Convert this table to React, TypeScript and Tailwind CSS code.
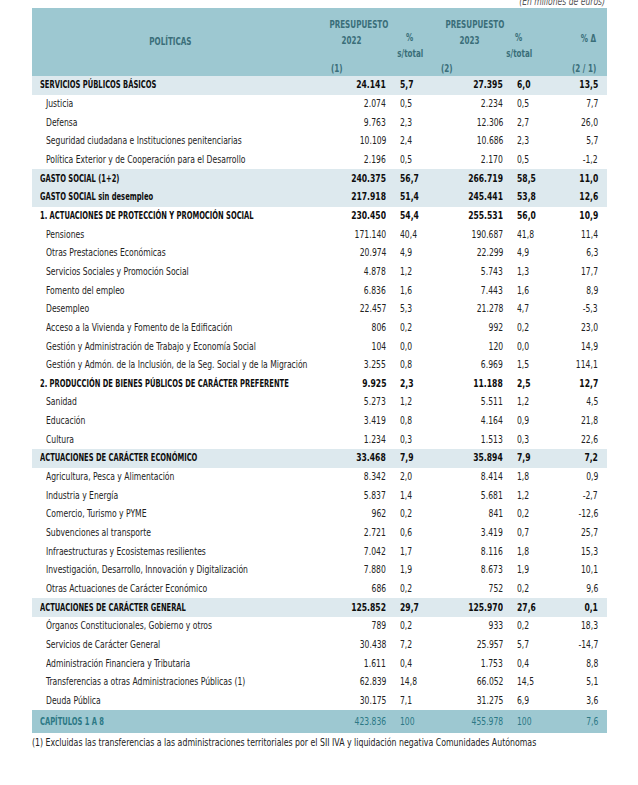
type Kind = "band" | "bold" | "item";

type Row = {
  label: string;
  kind: Kind;
  v22: string;
  p22: string;
  v23: string;
  p23: string;
  d: string;
};

const r = (kind: Kind, label: string, v22: string, p22: string, v23: string, p23: string, d: string): Row => ({
  kind,
  label,
  v22,
  p22,
  v23,
  p23,
  d,
});

const rows: Row[] = [
  r("band", "SERVICIOS PÚBLICOS BÁSICOS", "24.141", "5,7", "27.395", "6,0", "13,5"),
  r("item", "Justicia", "2.074", "0,5", "2.234", "0,5", "7,7"),
  r("item", "Defensa", "9.763", "2,3", "12.306", "2,7", "26,0"),
  r("item", "Seguridad ciudadana e Instituciones penitenciarias", "10.109", "2,4", "10.686", "2,3", "5,7"),
  r("item", "Política Exterior y de Cooperación para el Desarrollo", "2.196", "0,5", "2.170", "0,5", "-1,2"),
  r("band", "GASTO SOCIAL (1+2)", "240.375", "56,7", "266.719", "58,5", "11,0"),
  r("band", "GASTO SOCIAL sin desempleo", "217.918", "51,4", "245.441", "53,8", "12,6"),
  r("bold", "1. ACTUACIONES DE PROTECCIÓN Y PROMOCIÓN SOCIAL", "230.450", "54,4", "255.531", "56,0", "10,9"),
  r("item", "Pensiones", "171.140", "40,4", "190.687", "41,8", "11,4"),
  r("item", "Otras Prestaciones Económicas", "20.974", "4,9", "22.299", "4,9", "6,3"),
  r("item", "Servicios Sociales y Promoción Social", "4.878", "1,2", "5.743", "1,3", "17,7"),
  r("item", "Fomento del empleo", "6.836", "1,6", "7.443", "1,6", "8,9"),
  r("item", "Desempleo", "22.457", "5,3", "21.278", "4,7", "-5,3"),
  r("item", "Acceso a la Vivienda y Fomento de la Edificación", "806", "0,2", "992", "0,2", "23,0"),
  r("item", "Gestión y Administración de Trabajo y Economía Social", "104", "0,0", "120", "0,0", "14,9"),
  r("item", "Gestión y Admón. de la Inclusión, de la Seg. Social y de la Migración", "3.255", "0,8", "6.969", "1,5", "114,1"),
  r("bold", "2. PRODUCCIÓN DE BIENES PÚBLICOS DE CARÁCTER PREFERENTE", "9.925", "2,3", "11.188", "2,5", "12,7"),
  r("item", "Sanidad", "5.273", "1,2", "5.511", "1,2", "4,5"),
  r("item", "Educación", "3.419", "0,8", "4.164", "0,9", "21,8"),
  r("item", "Cultura", "1.234", "0,3", "1.513", "0,3", "22,6"),
  r("band", "ACTUACIONES DE CARÁCTER ECONÓMICO", "33.468", "7,9", "35.894", "7,9", "7,2"),
  r("item", "Agricultura, Pesca y Alimentación", "8.342", "2,0", "8.414", "1,8", "0,9"),
  r("item", "Industria y Energía", "5.837", "1,4", "5.681", "1,2", "-2,7"),
  r("item", "Comercio, Turismo y PYME", "962", "0,2", "841", "0,2", "-12,6"),
  r("item", "Subvenciones al transporte", "2.721", "0,6", "3.419", "0,7", "25,7"),
  r("item", "Infraestructuras y Ecosistemas resilientes", "7.042", "1,7", "8.116", "1,8", "15,3"),
  r("item", "Investigación, Desarrollo, Innovación y Digitalización", "7.880", "1,9", "8.673", "1,9", "10,1"),
  r("item", "Otras Actuaciones de Carácter Económico", "686", "0,2", "752", "0,2", "9,6"),
  r("band", "ACTUACIONES DE CARÁCTER GENERAL", "125.852", "29,7", "125.970", "27,6", "0,1"),
  r("item", "Órganos Constitucionales, Gobierno y otros", "789", "0,2", "933", "0,2", "18,3"),
  r("item", "Servicios de Carácter General", "30.438", "7,2", "25.957", "5,7", "-14,7"),
  r("item", "Administración Financiera y Tributaria", "1.611", "0,4", "1.753", "0,4", "8,8"),
  r("item", "Transferencias a otras Administraciones Públicas (1)", "62.839", "14,8", "66.052", "14,5", "5,1"),
  r("item", "Deuda Pública", "30.175", "7,1", "31.275", "6,9", "3,6"),
];

const cols = "grid grid-cols-[300px_56px_58px_58px_56px_1fr]";

// the source PDF is a narrow face (Calibri), so text is squeezed horizontally
const squeezeL = "inline-block whitespace-nowrap origin-left scale-x-[0.85]";
const squeezeR = "inline-block whitespace-nowrap origin-right scale-x-[0.85]";
const squeezeCaps = "inline-block whitespace-nowrap origin-left scale-x-[0.75]";
const squeezeHead = "inline-block whitespace-nowrap origin-center scale-x-[0.8]";
const squeezeHeadR = "inline-block whitespace-nowrap origin-right scale-x-[0.8]";
const squeezeHeadL = "inline-block whitespace-nowrap origin-left scale-x-[0.8]";

function BodyRow({ row }: { row: Row }) {
  const strong = row.kind !== "item";
  const bg = row.kind === "band" ? "bg-[#dde9ee]" : "";
  const weight = strong ? "font-bold text-[#0d0d0d]" : "text-[#222222]";
  return (
    <div className={`${cols} h-[18.67px] items-center ${bg} ${weight}`}>
      <div className={strong ? "pl-[8px]" : "pl-[14px]"}>
        <span className={strong ? squeezeCaps : squeezeL}>{row.label}</span>
      </div>
      <div className="text-right pr-[2px]">
        <span className={squeezeR}>{row.v22}</span>
      </div>
      <div className="pl-[12px]">
        <span className={squeezeL}>{row.p22}</span>
      </div>
      <div className="text-right pr-[1px]">
        <span className={squeezeR}>{row.v23}</span>
      </div>
      <div className="pl-[13px]">
        <span className={squeezeL}>{row.p23}</span>
      </div>
      <div className="text-right pr-[9px]">
        <span className={squeezeR}>{row.d}</span>
      </div>
    </div>
  );
}

export default function App() {
  return (
    <div
      className="min-h-[785px] w-[638px] bg-white text-[10px] leading-[12px]"
      style={{ fontFamily: '"DejaVu Sans Condensed", "Liberation Sans", sans-serif' }}
    >
      <div className="ml-[32px] w-[575px]">
        <div className="flex h-[8px] items-end justify-end overflow-hidden pr-[2px]">
          <span className={`${squeezeR} italic text-[#555555]`}>(En millones de euros)</span>
        </div>

        <div className="grid h-[68px] grid-cols-[290px_60px_56px_64px_34px_1fr] bg-[#9dc8d1] text-[10px] font-bold text-[#3a6e79]">
          <div className="flex items-center justify-center pr-[14px]">
            <span className={squeezeHead}>POLÍTICAS</span>
          </div>
          <div className="flex flex-col pt-[11px] pb-[1px]">
            <span className="text-center">
              <span className={squeezeHead}>PRESUPUESTO</span>
            </span>
            <span className="mt-[4px] text-center">
              <span className={squeezeHead}>2022</span>
            </span>
            <span className="mt-auto pl-[9px]">
              <span className={squeezeHeadL}>(1)</span>
            </span>
          </div>
          <div className="flex flex-col items-center pt-[24px]">
            <span className={squeezeHead}>%</span>
            <span className={`${squeezeHead} mt-[4px]`}>s/total</span>
          </div>
          <div className="flex flex-col pt-[11px] pb-[1px]">
            <span className="text-center">
              <span className={squeezeHead}>PRESUPUESTO</span>
            </span>
            <span className="mt-[4px] text-center">
              <span className={squeezeHead}>2023</span>
            </span>
            <span className="mt-auto pl-[3px]">
              <span className={squeezeHeadL}>(2)</span>
            </span>
          </div>
          <div className="flex flex-col items-center pt-[24px]">
            <span className={squeezeHead}>%</span>
            <span className={`${squeezeHead} mt-[4px]`}>s/total</span>
          </div>
          <div className="flex flex-col items-end pt-[25px] pb-[1px] pr-[11px]">
            <span className={squeezeHeadR}>%&nbsp;Δ</span>
            <span className={`${squeezeHeadR} mt-auto`}>(2 / 1)</span>
          </div>
        </div>

        {rows.map((row) => (
          <BodyRow key={row.label} row={row} />
        ))}

        <div className={`${cols} h-[23px] items-center bg-[#9dc8d1] text-[#2c7885]`}>
          <div className="pl-[8px] font-bold">
            <span className={squeezeCaps}>CAPÍTULOS 1 A 8</span>
          </div>
          <div className="text-right pr-[2px]">
            <span className={squeezeR}>423.836</span>
          </div>
          <div className="pl-[12px]">
            <span className={squeezeL}>100</span>
          </div>
          <div className="text-right pr-[1px]">
            <span className={squeezeR}>455.978</span>
          </div>
          <div className="pl-[13px]">
            <span className={squeezeL}>100</span>
          </div>
          <div className="text-right pr-[9px]">
            <span className={squeezeR}>7,6</span>
          </div>
        </div>

        <div className="flex h-[20px] items-center text-[#222222]">
          <span className="inline-block whitespace-nowrap origin-left scale-x-[0.87]">
            (1) Excluidas las transferencias a las administraciones territoriales por el SII IVA y liquidación negativa Comunidades Autónomas
          </span>
        </div>
      </div>
    </div>
  );
}
